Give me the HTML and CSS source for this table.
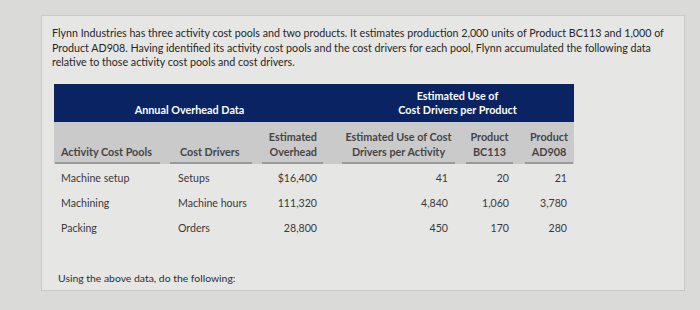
FILE: index.html
```html
<!DOCTYPE html>
<html>
<head>
<meta charset="utf-8">
<link rel="stylesheet" href="styles.css">
</head>
<body>
<div class="page">
  <div class="card">
    <p class="intro">Flynn Industries has three activity cost pools and two products. It estimates production 2,000 units of Product BC113 and 1,000 of Product AD908. Having identified its activity cost pools and the cost drivers for each pool, Flynn accumulated the following data relative to those activity cost pools and cost drivers.</p>
    <div class="table">
      <div class="band">
        <div class="band-cell left">Annual Overhead Data</div>
        <div class="band-cell right">Estimated Use of<br>Cost Drivers per Product</div>
      </div>
      <div class="row head">
        <div class="c c1"><span class="in">Activity Cost Pools</span></div>
        <div class="c c2"><span class="in">Cost Drivers</span></div>
        <div class="c c3"><span class="in">Estimated<br>Overhead</span></div>
        <div class="c c4"><span class="in">Estimated Use of Cost<br>Drivers per Activity</span></div>
        <div class="c c5"><span class="in">Product<br>BC113</span></div>
        <div class="c c6"><span class="in">Product<br>AD908</span></div>
      </div>
      <div class="row data first">
        <div class="c c1"><span class="in">Machine setup</span></div>
        <div class="c c2"><span class="in">Setups</span></div>
        <div class="c c3"><span class="in">$16,400</span></div>
        <div class="c c4"><span class="in">41</span></div>
        <div class="c c5"><span class="in">20</span></div>
        <div class="c c6"><span class="in">21</span></div>
      </div>
      <div class="row data">
        <div class="c c1"><span class="in">Machining</span></div>
        <div class="c c2"><span class="in">Machine hours</span></div>
        <div class="c c3"><span class="in">111,320</span></div>
        <div class="c c4"><span class="in">4,840</span></div>
        <div class="c c5"><span class="in">1,060</span></div>
        <div class="c c6"><span class="in">3,780</span></div>
      </div>
      <div class="row data">
        <div class="c c1"><span class="in">Packing</span></div>
        <div class="c c2"><span class="in">Orders</span></div>
        <div class="c c3"><span class="in">28,800</span></div>
        <div class="c c4"><span class="in">450</span></div>
        <div class="c c5"><span class="in">170</span></div>
        <div class="c c6"><span class="in">280</span></div>
      </div>
    </div>
    <p class="outro">Using the above data, do the following:</p>
  </div>
</div>
</body>
</html>
```
FILE: styles.css
```css
html, body {
  margin: 0;
  padding: 0;
  background: #dadad8;
}
body {
  font-family: Lato, "Open Sans", sans-serif;
  color: #2e2e2e;
  width: 700px;
  height: 310px;
  overflow: hidden;
}
.page {
  padding: 15px 14px 0 41px;
}
.card {
  width: 644px;
  height: 276px;
  box-sizing: border-box;
  border: 1px solid #c9c9c7;
  background: #e6e6e4;
  padding: 10px 0 0 10px;
}
.intro {
  margin: 0;
  width: 628px;
  font-size: 10.7px;
  line-height: 14.5px;
  color: #262626;
}
.table {
  margin: 14px 0 0 2px;
  width: 520px;
}
.band {
  display: grid;
  grid-template-columns: 279px 241px;
  height: 38px;
  background: #0a2463;
  color: #ffffff;
  font-weight: 700;
  font-size: 10.8px;
  line-height: 14px;
}
.band-cell {
  display: flex;
  align-items: flex-end;
  justify-content: center;
  text-align: center;
  padding-bottom: 5px;
}
.band-cell.left {
  padding-right: 8px;
}
.band-cell.right {
  padding-left: 10px;
  padding-right: 2px;
}
.row {
  display: grid;
  grid-template-columns: 111px 92px 76px 127px 59px 55px;
}
.head {
  height: 42px;
  background: #cacaca;
  font-weight: 700;
  font-size: 10.8px;
  line-height: 15px;
  color: #454545;
}
.head .c {
  display: flex;
  align-items: flex-end;
}
.head .in {
  flex: 1;
  border-bottom: 2px solid #9a9a9a;
  padding-bottom: 3px;
}
.data {
  height: 25px;
  font-size: 10.6px;
  line-height: 25px;
  color: #3a3a3a;
}
.data .c { display: flex; }
.data .in { flex: 1; }
.data.first { margin-top: 2px; }
.in { display: block; }
.c1 .in { margin: 0 5px 0 1px; padding-left: 6px; }
.c2 .in { margin: 0 5px; padding-left: 8px; }
.c3 .in { margin: 0 10px 0 5px; padding-right: 6px; text-align: right; }
.c4 .in { margin: 0 5px 0 9px; padding-right: 7px; text-align: right; }
.c5 .in { margin: 0 6px; padding-right: 4px; text-align: right; }
.c6 .in { margin: 0 1px 0 6px; padding-right: 6px; text-align: right; }
.head .c4 .in, .head .c5 .in, .head .c6 .in {
  text-align: center;
  padding-right: 0;
}
.head .c2 .in { padding-left: 10px; }
.outro {
  margin: 31px 0 0 6px;
  font-size: 10.4px;
  color: #2e2e2e;
}
```
